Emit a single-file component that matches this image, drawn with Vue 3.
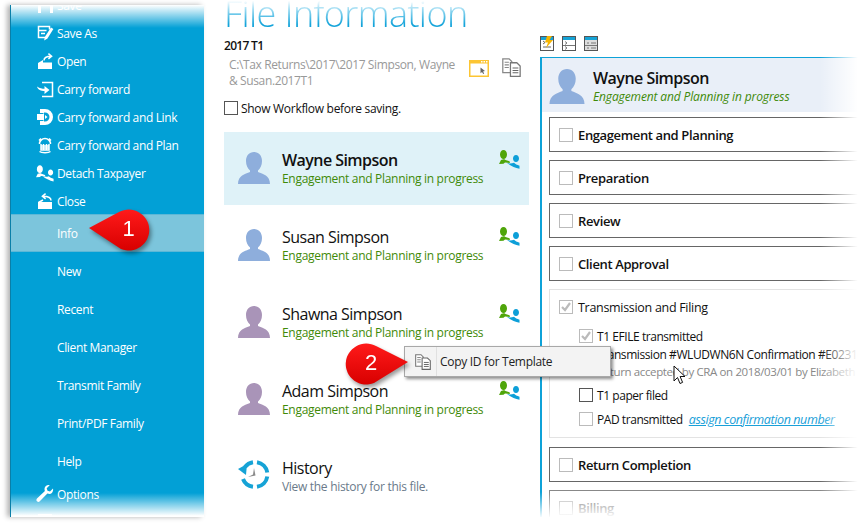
<script setup>
const PAIR_L = 'M4.500 1c2 0 3.500 2 3.500 4.500S6.500 10 4.500 10 1 8 1 5.500 2.500 1 4.500 1zM0 15l2-4 2.500-.8h1l1 .8 4 1.200.5 1.800-5-.4-1.500 1.100z'
const PAIR_R = 'M17 6c1.800 0 3 1.600 3 3.500S18.800 13 17 13s-3-1.600-3-3.500S15.200 6 17 6zM8 14c3 1 5 .2 7-.2 1 1.200 3.200 2.200 5.500 3v3c-4.500-1-8.500-3-12.500-5.800z'

const topItems = [
  { label: 'Save', fill: 'M2 1h13l2 2v14H2zM5 1v5h8V1zM5 10v7h9v-7z', stroke: '' },
  { label: 'Save As', fill: 'M15 3.500l2.400 1.600-6 9.400-3.200 2 .6-3.600z', stroke: 'M10 13.500H2.500v-11h11v3M2.500 6.500h8M5 9.500h4' },
  { label: 'Open', fill: 'M2 11l5-3v2.500h9V17H2z', stroke: 'M8 8.500C8 5.500 11 4.200 15 4.200M12.400 1.600L15.600 4.200l-3.200 2.600' },
  { label: 'Carry forward', fill: 'M1 6.500c3 2 5 2.200 7.500 2.200V6l5 4-5 4v-3C5 11 2 10 1 6.500z', stroke: 'M6 2.500h10.500v14H6' },
  { label: 'Carry forward and Link', fill: 'M4 1h5a8 8 0 0 1 0 16H4v-4h3.500v-1H1V6h6.500V5H4zM8 4.500v9h1a4.500 4.500 0 0 0 0-9zM9 7v4l2.500-2z', stroke: '' },
  { label: 'Carry forward and Plan', fill: '', stroke: 'M3.500 8a5.500 5.500 0 0 1 11 0M5 8v6h8V8M5 10h8M5 12h8M7.500 8v6M10.500 8v6M3 4.500L5 2.500M15 4.500l-2-2M3.500 15.500c2 1.500 9 1.500 11 0' },
  { label: 'Detach Taxpayer', fill: PAIR_L + PAIR_R, stroke: '', vb: '0 0 21 20' },
  { label: 'Close', fill: 'M2 10h14v7H2z', stroke: 'M15 8.500C15 5.500 11 4.200 7 4.200M9.600 1.600L6.400 4.200l3.200 2.600M2.500 10.500L7 8' }
]
const midItems = ['Info', 'New', 'Recent', 'Client Manager', 'Transmit Family', 'Print/PDF Family', 'Help']
const bottomItems = [
  { label: 'Options', fill: 'M17 3.500l-3 3-2.500-.8-.8-2.500 3-3c-2.500-.6-5 1-5.200 3.600 0 .8.100 1.500.400 2.100L1 13.500c-.8.800-.8 2 0 2.800.8.800 2 .8 2.800 0l7.600-7.700c.6.300 1.300.4 2 .4 2.600-.2 4.200-2.700 3.600-5.500z' },
  { label: 'Save and Exit', fill: 'M2 1h14v2H2z' }
]
const people = [
  { name: 'Wayne Simpson', color: '#8eaedc', active: true },
  { name: 'Susan Simpson', color: '#8eaedc', active: false },
  { name: 'Shawna Simpson', color: '#a994b8', active: false },
  { name: 'Adam Simpson', color: '#a994b8', active: false }
]
const stages = ['Engagement and Planning', 'Preparation', 'Review', 'Client Approval']
const STATUS = 'Engagement and Planning in progress'
</script>

<template>
  <div class="screen">
    <aside class="side">
      <ul class="list first">
        <li v-for="it in topItems" :key="it.label" class="item short">
          <svg class="ico" :viewBox="it.vb || '0 0 18 18'" width="18" height="18">
            <path v-if="it.fill" :d="it.fill" fill="#fff" fill-rule="evenodd" />
            <path v-if="it.stroke" :d="it.stroke" fill="none" stroke="#fff" stroke-width="1.500" />
          </svg>
          <span>{{ it.label }}</span>
        </li>
      </ul>
      <ul class="list mid">
        <li v-for="(m, i) in midItems" :key="m" class="item tall" :class="{ sel: i === 0 }">
          <span>{{ m }}</span>
        </li>
      </ul>
      <ul class="list">
        <li v-for="it in bottomItems" :key="it.label" class="item short">
          <svg class="ico" viewBox="0 0 18 18" width="18" height="18">
            <path :d="it.fill" fill="#fff" />
          </svg>
          <span>{{ it.label }}</span>
        </li>
      </ul>
      <div class="fade-top"></div>
      <div class="fade-bottom"></div>
    </aside>

    <main class="middle">
      <h1 class="title">File Information</h1>
      <div class="year">2017 T1</div>
      <div class="path-row">
        <div class="path">C:\Tax Returns\2017\2017 Simpson, Wayne &amp; Susan.2017T1</div>
        <svg class="win" viewBox="0 0 20 17" width="20" height="17">
          <rect x=".75" y=".75" width="18.500" height="15.500" fill="#fff" stroke="#fcc533" stroke-width="1.500" />
          <rect x="0" y="0" width="20" height="3.500" fill="#fcc533" />
          <rect x="12" y="1" width="1.500" height="1.500" fill="#fff" /><rect x="14.500" y="1" width="1.500" height="1.500" fill="#fff" /><rect x="17" y="1" width="1.500" height="1.500" fill="#fff" />
          <path d="M11.500 7.500l4.500 3.500-2 .4 1.200 2.200-1 .5-1.200-2.200-1.500 1.400z" fill="#666" />
        </svg>
        <svg class="copy" viewBox="0 0 18 18" width="19" height="19">
          <path d="M.75.75h6l2.500 2.500v10.500H.75z" fill="#fff" stroke="#888" stroke-width="1.200" />
          <path d="M2.500 4h4M2.500 6.500h4M2.500 9h4" stroke="#888" stroke-width="1" />
          <path d="M8 4.500h6l3.200 3v9.800H8z" fill="#fff" stroke="#777" stroke-width="1.200" />
          <path d="M10 9.500h5.500M10 11.800h5.500M10 14h5.500" stroke="#666" stroke-width="1.100" />
        </svg>
      </div>
      <label class="workflow"><span class="cb dark"></span><span>Show Workflow before saving.</span></label>

      <div v-for="p in people" :key="p.name" class="person" :class="{ on: p.active }">
        <svg class="avatar" viewBox="0 0 32 32" width="32" height="32">
          <path :fill="p.color" d="M16 0c4.800 0 8 3.800 8 9 0 4-1.600 7.400-4 9.500v1.500c5 2 12 3.500 12 12H0c0-8.500 7-10 12-12v-1.500C9.600 16.400 8 13 8 9c0-5.200 3.200-9 8-9z" />
        </svg>
        <div class="who">
          <div class="name">{{ p.name }}</div>
          <div class="status">{{ STATUS }}</div>
        </div>
        <svg class="pair" viewBox="0 0 21 20" width="21" height="20">
          <path :d="PAIR_L" fill="#4fa50a" />
          <path :d="PAIR_R" fill="#0d9fd8" />
        </svg>
      </div>

      <div class="person">
        <svg class="avatar" viewBox="0 0 32 32" width="32" height="32">
          <path d="M19 2.200A12.500 12.500 0 0 1 29.300 12.500M29.300 16.500A12.500 12.500 0 0 1 19 26.800M15 26.800A12.500 12.500 0 0 1 5 19M7 7A12.500 12.500 0 0 1 15 2.200" fill="none" stroke="#16a3d6" stroke-width="4" />
          <path d="M0 9l9-5-1 11z" fill="#16a3d6" />
          <path d="M16 8l1.500 7.500L10 17l5-2.500z" fill="#8a8a8a" />
        </svg>
        <div class="who">
          <div class="name">History</div>
          <div class="status gray">View the history for this file.</div>
        </div>
      </div>
    </main>

    <section class="right">
      <div class="tools">
        <svg viewBox="0 0 14 15" width="14" height="15">
          <rect x=".5" y=".5" width="13" height="14" fill="#fff" stroke="#555" />
          <rect x="1" y="1" width="12" height="3" fill="#16a3d6" />
          <path d="M3 5l2 1.500L3 8M3 11h8" fill="none" stroke="#666" />
          <path d="M7 0h5L9.500 4H13L6 12l2-5.500H5z" fill="#f7b500" />
        </svg>
        <svg viewBox="0 0 14 15" width="14" height="15">
          <rect x=".5" y=".5" width="13" height="14" fill="#fff" stroke="#555" />
          <rect x="1" y="1" width="12" height="3" fill="#16a3d6" />
          <path d="M1 9.500h12M3 5.500l2 1.500-2 1.500M3 10.500l2 1.500-2 1.500" fill="none" stroke="#777" />
        </svg>
        <svg viewBox="0 0 14 15" width="14" height="15">
          <rect x=".5" y=".5" width="13" height="14" fill="#ddd" stroke="#555" />
          <rect x="1" y="1" width="12" height="3" fill="#16a3d6" />
          <path d="M1 9.500h12M3 7h2M7 7h5M3 12h2M7 12h5" fill="none" stroke="#777" />
        </svg>
      </div>
      <div class="panel">
        <header class="head">
          <svg class="big" viewBox="0 0 32 32" width="36" height="35">
            <path fill="#8eaedc" d="M16 0c4.800 0 8 3.800 8 9 0 4-1.600 7.400-4 9.500v1.500c5 2 12 3.500 12 12H0c0-8.500 7-10 12-12v-1.500C9.600 16.400 8 13 8 9c0-5.200 3.200-9 8-9z" />
          </svg>
          <div>
            <div class="head-name">Wayne Simpson</div>
            <div class="head-status">{{ STATUS }}</div>
          </div>
        </header>

        <div v-for="s in stages" :key="s" class="stage">
          <span class="cb"></span><span>{{ s }}</span>
        </div>

        <div class="open">
          <div class="open-title"><span class="cb checked"><svg viewBox="0 0 12 12" width="12" height="12"><path d="M2 6l3 3 5-7" fill="none" stroke="#bbb" stroke-width="2.200" /></svg></span><span>Transmission and Filing</span></div>
          <div class="sub r1"><span class="cb checked"><svg viewBox="0 0 12 12" width="12" height="12"><path d="M2 6l3 3 5-7" fill="none" stroke="#bbb" stroke-width="2.200" /></svg></span><span>T1 EFILE transmitted</span></div>
          <div class="sub detail">Transmission #WLUDWN6N Confirmation #E02316</div>
          <div class="sub note">Return accepted by CRA on 2018/03/01 by Elizabeth Simpson</div>
          <div class="sub r4"><span class="cb dark"></span><span>T1 paper filed</span></div>
          <div class="sub r5"><span class="cb"></span><span>PAD transmitted</span><a class="assign">assign confirmation number</a></div>
        </div>

        <div class="stage"><span class="cb"></span><span>Return Completion</span></div>
        <div class="stage"><span class="cb"></span><span>Billing</span></div>
      </div>
      <div class="fade-right"></div>
      <div class="fade-low"></div>
    </section>

    <div class="menu">
      <svg viewBox="0 0 18 18" width="16" height="16">
        <path d="M.75.75h6l2.500 2.500v10.500H.75z" fill="#fff" stroke="#777" stroke-width="1.200" />
        <path d="M2.500 4h4M2.500 6.500h4M2.500 9h4" stroke="#777" />
        <path d="M8 4.500h6l3.200 3v9.800H8z" fill="#fff" stroke="#666" stroke-width="1.200" />
        <path d="M10 9.500h5.500M10 11.800h5.500M10 14h5.500" stroke="#666" stroke-width="1.100" />
      </svg>
      <span class="menu-sep"></span>
      <span>Copy ID for Template</span>
    </div>

    <svg class="callout one" viewBox="0 0 72 52" width="72" height="52">
      <defs>
        <linearGradient id="red" x1="0" y1="0" x2="0" y2="1"><stop offset="0" stop-color="#ff1a1a" /><stop offset="1" stop-color="#d80000" /></linearGradient>
      </defs>
      <path d="M2 22L32 6a20.500 20.500 0 1 1 2 37z" fill="url(#red)" />
      <text x="35.500" y="30" class="num">1</text>
    </svg>
    <svg class="callout two" viewBox="0 0 72 52" width="72" height="52">
      <path d="M66 22L34 6a20.500 20.500 0 1 0-2 37z" fill="url(#red)" />
      <text x="23" y="30" class="num">2</text>
    </svg>

    <svg class="cursor" viewBox="0 0 13 20" width="13" height="20">
      <path d="M1 1v15l3.500-3.500 2.500 6 2.600-1.100-2.500-5.900H12z" fill="#fff" stroke="#111" stroke-width="1" />
    </svg>
  </div>
</template>

<style scoped>
* { box-sizing: border-box; }
.screen {
  position: relative; width: 862px; height: 523px; overflow: hidden; background: #fff;
  display: flex; align-items: flex-start; color: #111;
  font-family: "Open Sans", "Noto Sans", sans-serif; font-size: 12px; letter-spacing: -.3px;
}
.side {
  position: relative; flex: none; width: 194px; height: 512px; margin: 5px 0 0 10px; overflow: hidden;
  background: #02a0d6; border-left: 1px solid #0a7fa8; box-shadow: -3px 0 5px rgba(0, 0, 0, .3);
}
.list { list-style: none; margin: 0; padding: 0; }
.first { margin-top: -14px; }
.mid { margin-top: -1px; }
.item { position: relative; display: flex; align-items: center; padding-left: 46px; color: #fff; letter-spacing: -.36px; }
.short { height: 28px; }
.tall { height: 38px; }
.sel { background: #7cc5dc; box-shadow: inset 0 1px #5db7d6, inset 0 -1px #5db7d6; }
.ico { position: absolute; left: 25px; top: 5px; }
.fade-top { position: absolute; left: 0; right: 0; top: 0; height: 23px; background: linear-gradient(#fff, rgba(255, 255, 255, 0)); }
.fade-bottom { position: absolute; left: 0; right: 0; bottom: 0; height: 24px; background: linear-gradient(rgba(255, 255, 255, 0), #fff 95%); }

.middle { flex: none; width: 305px; margin-left: 20px; }
.title {
  margin: -11px 0 0 0; height: 49px; font-size: 36px; line-height: 49px; font-weight: 300; letter-spacing: -.6px; white-space: nowrap;
  background: linear-gradient(#fff 24%, #8fd6f0 44%, #15a4da 72%); -webkit-background-clip: text; background-clip: text; color: transparent;
}
.year { height: 16px; line-height: 16px; font-weight: 600; letter-spacing: -.7px; }
.path-row { display: flex; align-items: flex-start; height: 31px; margin-top: 3px; }
.path { width: 232px; margin: 0 8px 0 5px; color: #999; line-height: 16px; letter-spacing: -.38px; }
.win { margin: 3px 0 0 0; }
.copy { margin: 1px 0 0 13px; }
.workflow { display: flex; align-items: center; gap: 3px; margin-top: 12px; height: 16px; }
.cb { flex: none; display: inline-flex; align-items: center; justify-content: center; width: 14px; height: 14px; border: 1px solid #bbb; background: #fff; }
.cb.dark { border-color: #555; }
.person { display: flex; align-items: flex-start; height: 73px; margin-bottom: 4px; padding: 20px 0 0 14px; position: relative; }
.workflow + .person { margin-top: 16px; }
.person.on { background: #dff2f8; }
.who { margin: -3px 0 0 12px; }
.name { font-size: 16px; line-height: 22px; letter-spacing: -.52px; color: #111; }
.person.on .name { font-weight: 600; letter-spacing: -.55px; }
.status { color: #3f8a08; line-height: 16px; }
.status.gray { color: #6a7a8a; }
.pair { position: absolute; right: 9px; top: 17px; }

.right { position: relative; flex: 1; height: 523px; margin-left: 11px; overflow: hidden; }
.tools { display: flex; gap: 8px; margin: 36px 0 0 0; height: 21px; }
.panel { border-left: 2px solid #0ea2d8; border-top: 1px solid #0ea2d8; padding-bottom: 10px; width: 322px; height: 460px; overflow: hidden; }
.head { display: flex; align-items: flex-start; gap: 8px; height: 54px; padding: 11px 0 0 7px; background: #e9eff8; margin-bottom: 5px; }
.head-name { font-size: 16px; line-height: 20px; margin-top: -1px; font-weight: 600; letter-spacing: -.52px; }
.head-status { font-style: italic; color: #3f8a08; line-height: 16px; margin-top: 1px; letter-spacing: -.13px; }
.stage { display: flex; align-items: center; gap: 5px; height: 35px; width: 340px; margin: 0 0 8px 7px; padding-left: 9px; border: 1px solid #666; font-weight: 600; font-size: 13px; letter-spacing: -.37px; }
.stage:last-child { border-color: #888; color: #777; }
.open { height: 149px; width: 340px; margin: 0 0 9px 7px; border: 1px solid #e3e3e3; padding: 8px 0 0 9px; }
.open-title { display: flex; align-items: center; gap: 5px; height: 18px; font-size: 12.500px; letter-spacing: -.3px; }
.sub { display: flex; align-items: center; gap: 4px; margin-left: 20px; white-space: nowrap; font-size: 12px; letter-spacing: -.44px; height: 18px; }
.r1 { margin-top: 11px; }
.detail { margin-left: 38px; letter-spacing: -.42px; }
.note { margin-left: 38px; color: #888; height: 17px; font-size: 11.500px; letter-spacing: -.38px; }
.r4 { margin-top: 6px; }
.r5 { margin-top: 6px; }
.assign { margin-left: 2px; color: #19a0d8; font-style: italic; text-decoration: underline; font-size: 12.500px; letter-spacing: -.4px; }
.fade-right { position: absolute; top: 57px; right: 0; width: 42px; height: 466px; background: linear-gradient(to right, rgba(255, 255, 255, 0), #fff 90%); }
.fade-low { position: absolute; left: 0; right: 0; bottom: 5px; height: 26px; background: linear-gradient(rgba(255, 255, 255, 0), #fff); }
.fade-low::after { content: ""; position: absolute; left: 0; right: 0; top: 100%; height: 6px; background: #fff; }

.callout { position: absolute; filter: drop-shadow(2px 3px 2px rgba(0, 0, 0, .4)); overflow: visible; }
.one { left: 87px; top: 206px; }
.two { left: 342px; top: 340px; }
.num { fill: #fff; font-family: "Liberation Sans", sans-serif; font-size: 22px; letter-spacing: 0; }
.menu {
  position: absolute; left: 404px; top: 346px; width: 207px; height: 31px; display: flex; align-items: center;
  padding-left: 10px; background: #f3f3f3; border: 1px solid #a8a8a8; box-shadow: 2px 2px 3px rgba(0, 0, 0, .45); color: #222;
}
.menu-sep { width: 1px; height: 29px; background: #e0e0e0; margin: 0 3px 0 5px; }
.cursor { position: absolute; left: 673px; top: 365px; }
</style>
